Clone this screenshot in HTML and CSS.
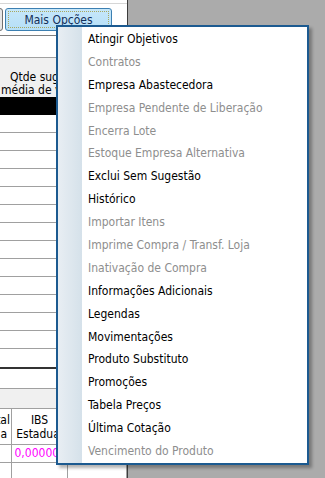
FILE: index.html
```html
<!DOCTYPE html>
<html lang="pt-BR">
  <head>
    <meta charset="UTF-8" />
    <meta name="viewport" content="width=device-width, initial-scale=1.0" />
    <title>Mais Opções</title>
    <link rel="stylesheet" href="styles.css">
  </head>
  <body>
    <div class="panel">
      <div class="toolbar">
        <span class="btn btn-prev"></span>
        <span class="btn btn-active"><span class="focus">Mais Opções</span></span>
      </div>
      <div class="field"></div>
      <div class="col-head">
        <span class="line-one">Qtde sugerida</span>
        <span class="line-two">média de venda</span>
      </div>
      <div class="row-selected"></div>
      <div class="row"></div>
      <div class="row"></div>
      <div class="row"></div>
      <div class="row"></div>
      <div class="row"></div>
      <div class="row"></div>
      <div class="row"></div>
      <div class="row"></div>
      <div class="row"></div>
      <div class="row"></div>
      <div class="row"></div>
      <div class="row"></div>
      <div class="row"></div>
      <div class="row-last"></div>
      <div class="thick"></div>
      <div class="blank"></div>
      <div class="band"></div>
      <div class="totals">
        <div class="cell head first"><span>Total</span><span>Custo a</span></div>
        <div class="cell head mid">IBS<br>Estadual</div>
        <div class="cell head"></div>
        <div class="cell data first"></div>
        <div class="cell data mid magenta">0,000000</div>
        <div class="cell data"></div>
        <div class="cell rest first"></div>
        <div class="cell rest mid"></div>
        <div class="cell rest"></div>
      </div>
    </div>

    <!-- menu aberto do botao Mais Opcoes -->
    <ul class="menu">
      <li>Atingir Objetivos</li>
      <li class="off">Contratos</li>
      <li>Empresa Abastecedora</li>
      <li class="off">Empresa Pendente de Liberação</li>
      <li class="off">Encerra Lote</li>
      <li class="off">Estoque Empresa Alternativa</li>
      <li>Exclui Sem Sugestão</li>
      <li>Histórico</li>
      <li class="off">Importar Itens</li>
      <li class="off">Imprime Compra / Transf. Loja</li>
      <li class="off">Inativação de Compra</li>
      <li>Informações Adicionais</li>
      <li>Legendas</li>
      <li>Movimentações</li>
      <li>Produto Substituto</li>
      <li>Promoções</li>
      <li>Tabela Preços</li>
      <li>Última Cotação</li>
      <li class="off">Vencimento do Produto</li>
    </ul>
  </body>
</html>
```
FILE: styles.css
```css
body {
  margin: 0;
  width: 325px;
  height: 478px;
  overflow: hidden;
  position: relative;
  background-color: #ababab;
  font-family: "DejaVu Sans Condensed", "DejaVu Sans", sans-serif;
  font-stretch: condensed;
  font-size: 12px;
  color: #000;
}
.panel {
  width: 127px;
  height: 478px;
  background-color: #fff;
  border-right: 1px solid #3c3c3c;
  display: flex;
  flex-direction: column;
  overflow: hidden;
}
.toolbar {
  margin-top: 3px;
  border-top: 1px solid #d6d6d6;
  height: 27px;
  padding-top: 4px;
  display: flex;
  gap: 2px;
}
.btn {
  height: 23px;
  box-sizing: border-box;
  border-radius: 3px;
}
.btn-prev {
  width: 20px;
  margin-left: -17px;
  border: 1px solid #707070;
  background-color: #e6e6e6;
}
.btn-active {
  width: 107px;
  border: 1px solid #3c7fb1;
  background: linear-gradient(#c6e7fa, #b6dff7);
  padding: 2px;
}
.focus {
  display: block;
  height: 100%;
  box-sizing: border-box;
  border: 1px dotted #a8a860;
  text-align: center;
  line-height: 17px;
  color: #14305a;
}
.field {
  height: 21px;
  border-top: 1px solid #7f7f7f;
  border-bottom: 1px solid #a0a0a0;
}
.col-head {
  height: 39px;
  background-color: #f0f0f0;
  display: flex;
  flex-direction: column;
  justify-content: flex-end;
  line-height: 13px;
  white-space: nowrap;
}
.line-one {
  padding-left: 10px;
}
.line-two {
  padding-left: 1px;
}
.row-selected {
  height: 18px;
  background-color: #000;
}
.row {
  height: 17px;
  border-bottom: 1px solid #a0a0a0;
}
.row-last {
  height: 18px;
}
.thick {
  height: 2px;
  background-color: #333;
}
.blank {
  height: 19px;
  border-bottom: 1px solid #a0a0a0;
}
.band {
  height: 19px;
  background-color: #f0f0f0;
  border-bottom: 1px solid #a0a0a0;
}
.totals {
  flex: 1;
  display: grid;
  grid-template-columns: 12px 56px 1fr;
  grid-template-rows: 36px 18px 1fr;
}
.cell {
  box-sizing: border-box;
  border-right: 1px solid #a0a0a0;
  overflow: hidden;
  white-space: nowrap;
}
.head {
  border-bottom: 1px solid #a0a0a0;
  text-align: center;
  line-height: 14px;
  padding-top: 4px;
}
.head.first {
  display: flex;
  flex-direction: column;
  align-items: flex-end;
  padding-right: 1px;
}
.head.first span:last-child {
  margin-right: 3px;
}
.data {
  border-bottom: 1px solid #a0a0a0;
  text-align: right;
  line-height: 17px;
  padding-right: 1px;
}
.magenta {
  color: #ff00ff;
}
.menu {
  position: absolute;
  left: 56px;
  top: 25px;
  width: 253px;
  box-sizing: border-box;
  margin: 0;
  padding: 1px 0 0;
  list-style: none;
  border: 2px solid #1c5a90;
  background-color: #fff;
  background-image: linear-gradient(to right, #e8eef3, #d5e1ea);
  background-size: 24px 100%;
  background-repeat: no-repeat;
  box-shadow: 3px 3px 3px rgba(0, 0, 0, 0.3);
}
.menu li {
  height: 22.9px;
  line-height: 22.9px;
  padding-left: 30px;
  white-space: nowrap;
}
.menu li.off {
  color: #8e8e8e;
}
```
